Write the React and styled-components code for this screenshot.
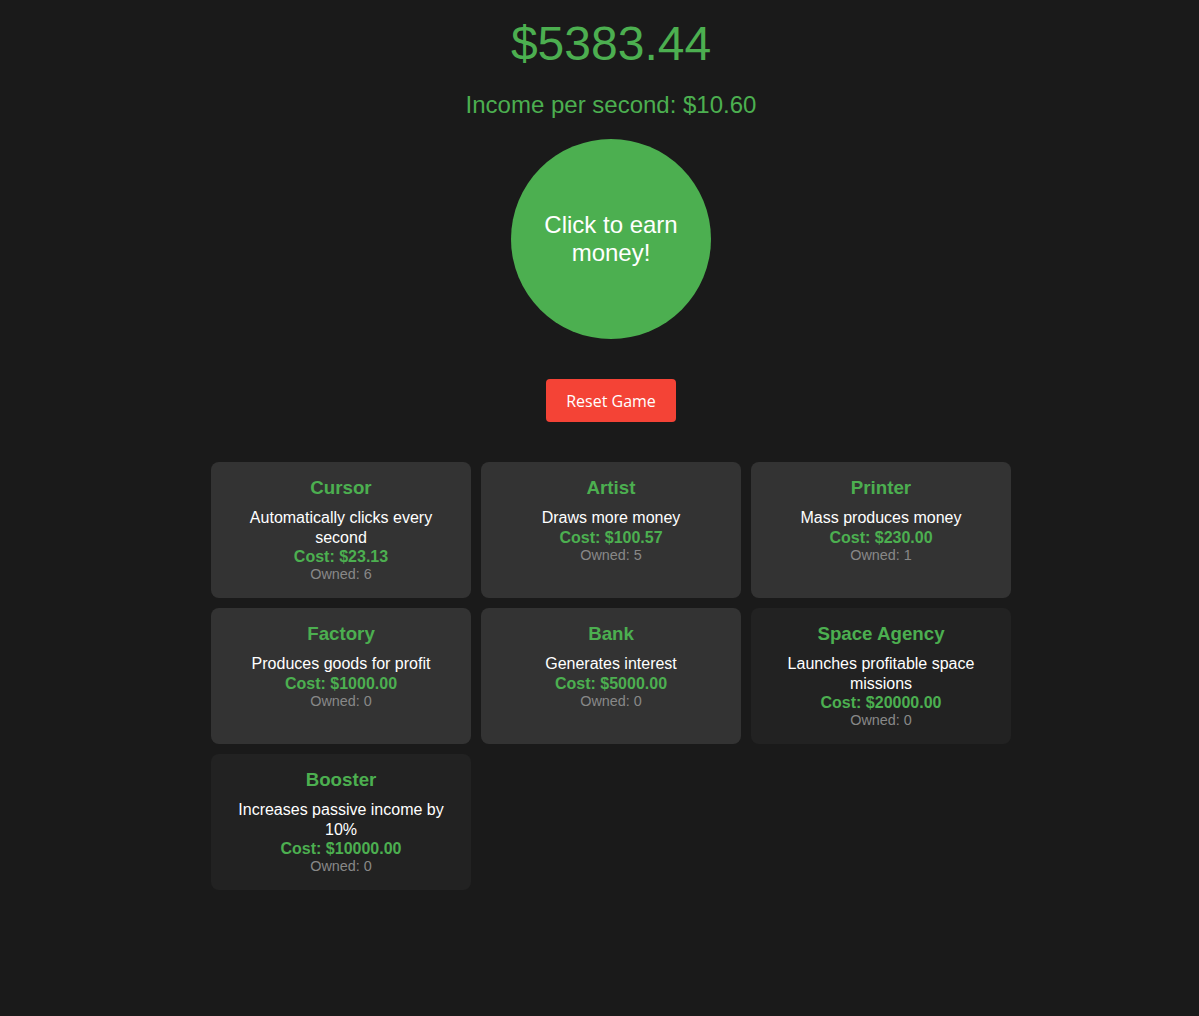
import React from "react";
import styled, { createGlobalStyle } from "styled-components";

const Global = createGlobalStyle`
  html, body { margin: 0; padding: 0; background: #1a1a1a; }
  body { font-family: "Liberation Sans", Arial, sans-serif; color: #fff; }
`;

const Page = styled.div`
  min-height: 1016px;
  box-sizing: border-box;
  padding: 16px 0 40px 23px;
  display: flex;
  flex-direction: column;
  align-items: center;
`;

const Money = styled.h1`
  margin: 0;
  font-size: 48px;
  font-weight: 400;
  color: #4caf50;
`;

const Income = styled.p`
  margin: 20px 0 0;
  font-size: 24px;
  color: #4caf50;
`;

const EarnButton = styled.button`
  margin-top: 20px;
  width: 200px;
  height: 200px;
  border: none;
  border-radius: 50%;
  background: #4caf50;
  color: #fff;
  font-family: "Liberation Sans", Arial, sans-serif;
  font-size: 24px;
  padding: 0 20px;
  cursor: pointer;
`;

const ResetButton = styled.button`
  margin-top: 40px;
  padding: 10px 20px;
  border: none;
  border-radius: 4px;
  background: #f44336;
  color: #fff;
  font-family: "Open Sans", "Noto Sans", sans-serif;
  font-size: 16px;
  height: 43px;
  cursor: pointer;
`;

const Grid = styled.div`
  margin-top: 40px;
  display: grid;
  grid-template-columns: repeat(3, 260px);
  grid-auto-rows: 136px;
  gap: 10px;
`;

const Card = styled.div`
  box-sizing: border-box;
  padding: 15px 15px 14px;
  border-radius: 8px;
  background: ${(p) => (p.$affordable ? "#333" : "#222")};
  text-align: center;
  line-height: 1.2;
`;

const Title = styled.h3`
  margin: 0 0 9px;
  font-size: 18.72px;
  font-weight: 700;
  color: #4caf50;
`;

const Desc = styled.p`
  margin: 0;
  font-size: 16px;
  color: #fff;
`;

const Cost = styled.p`
  margin: 0;
  font-size: 16px;
  font-weight: 700;
  color: #4caf50;
`;

const Owned = styled.p`
  margin: 0;
  font-size: 14.4px;
  color: #888;
`;

const money = 5383.44;

const items = [
  { name: "Cursor", desc: "Automatically clicks every second", cost: 23.13, owned: 6 },
  { name: "Artist", desc: "Draws more money", cost: 100.57, owned: 5 },
  { name: "Printer", desc: "Mass produces money", cost: 230.0, owned: 1 },
  { name: "Factory", desc: "Produces goods for profit", cost: 1000.0, owned: 0 },
  { name: "Bank", desc: "Generates interest", cost: 5000.0, owned: 0 },
  { name: "Space Agency", desc: "Launches profitable space missions", cost: 20000.0, owned: 0 },
  { name: "Booster", desc: "Increases passive income by 10%", cost: 10000.0, owned: 0 },
];

export default function App() {
  return (
    <>
      <Global />
      <Page>
        <Money>${money.toFixed(2)}</Money>
        <Income>Income per second: $10.60</Income>
        <EarnButton>Click to earn money!</EarnButton>
        <ResetButton>Reset Game</ResetButton>
        <Grid>
          {items.map((it) => (
            <Card key={it.name} $affordable={money >= it.cost}>
              <Title>{it.name}</Title>
              <Desc>{it.desc}</Desc>
              <Cost>Cost: ${it.cost.toFixed(2)}</Cost>
              <Owned>Owned: {it.owned}</Owned>
            </Card>
          ))}
        </Grid>
      </Page>
    </>
  );
}
